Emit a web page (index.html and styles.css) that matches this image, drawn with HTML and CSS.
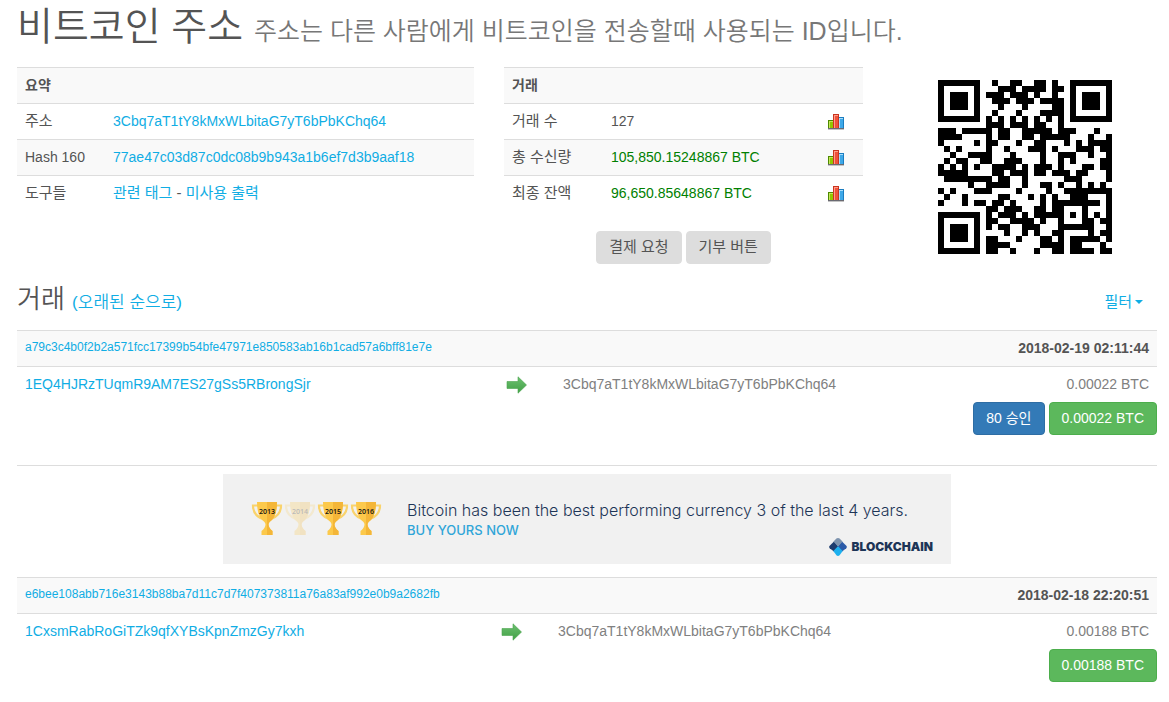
FILE: index.html
```html
<!DOCTYPE html>
<html lang="ko">
<head>
<meta charset="utf-8">
<meta name="viewport" content="width=device-width, initial-scale=1">
<title>비트코인 주소</title>
<link rel="stylesheet" href="styles.css">
</head>
<body>
<svg class="defs" width="0" height="0" aria-hidden="true">
  <defs>
    <linearGradient id="arrow-fill" x1="0" y1="0" x2="0" y2="1"><stop offset="0" stop-color="#6cc070"/><stop offset="1" stop-color="#42a046"/></linearGradient>
    <symbol id="chart" viewBox="0 0 16 16">
      <path fill="#4e8a00" d="M0 6h6v9H0z"/><path fill="#c4e65a" d="M1 7h4v8H1z"/><path fill="#93c700" d="M2 8h3v7H2z"/>
      <path fill="#1b7dc0" d="M10 3h6v12h-6z"/><path fill="#a6dcfb" d="M10 4h5v11h-5z"/><path fill="#3ea8e8" d="M12 5h3v10h-3z"/>
      <path fill="#c9341f" d="M5 0h6v15H5z"/><path fill="#ff9d8a" d="M6 1h4v14H6z"/><path fill="#f0523b" d="M7 2h3v13H7z"/>
      <path fill="#6a6a72" d="M0 14h16v1H0z"/><path fill="#c4c4c4" d="M0 15h16v1H0z"/>
    </symbol>
    <symbol id="arrow" viewBox="0 0 22 18">
      <path fill="url(#arrow-fill)" stroke="#4aa44e" stroke-width=".6" d="M1 5.500h11V.8L20.500 9 12 17.200v-4.700H1z"/>
    </symbol>
    <symbol id="trophy" viewBox="0 0 32 36">
      <path fill="none" stroke="#f9d36c" stroke-width="2.2" d="M7 4.500H2q0 10 10 13.500M25 4.500h5q0 10-10 13.500"/>
      <path fill="#fcc94b" d="M6 1h20q0 15-7.500 20l-1 2q0 4 4 7v4h-11v-4q4-3 4-7l-1-2Q6 16 6 1z"/>
      <path fill="#f4b638" d="M16 1h10q0 15-7.500 20l-1 2q0 4 4 7v4H16z"/>
    </symbol>
  </defs>
</svg>
<main class="page">
  <h1 class="title">비트코인 주소 <small>주소는 다른 사람에게 비트코인을 전송할때 사용되는 ID입니다.</small></h1>

  <div class="overview">
    <table class="info summary">
      <thead><tr><th colspan="2">요약</th></tr></thead>
      <tbody>
        <tr><td class="label ko">주소</td><td><a href="#">3Cbq7aT1tY8kMxWLbitaG7yT6bPbKChq64</a></td></tr>
        <tr><td class="label">Hash 160</td><td><a href="#">77ae47c03d87c0dc08b9b943a1b6ef7d3b9aaf18</a></td></tr>
        <tr><td class="label ko">도구들</td><td class="ko"><a href="#">관련 태그</a> - <a href="#">미사용 출력</a></td></tr>
      </tbody>
    </table>

    <div>
      <table class="info totals">
        <thead><tr><th colspan="3">거래</th></tr></thead>
        <tbody>
          <tr><td class="label ko">거래 수</td><td>127</td><td class="chart-cell"><a href="#" aria-label="거래 수 차트"><svg class="chart"><use href="#chart"/></svg></a></td></tr>
          <tr><td class="label ko">총 수신량</td><td class="amount">105,850.15248867 BTC</td><td class="chart-cell"><a href="#" aria-label="총 수신량 차트"><svg class="chart"><use href="#chart"/></svg></a></td></tr>
          <tr><td class="label ko">최종 잔액</td><td class="amount">96,650.85648867 BTC</td><td class="chart-cell"><a href="#" aria-label="최종 잔액 차트"><svg class="chart"><use href="#chart"/></svg></a></td></tr>
        </tbody>
      </table>
      <div class="actions">
        <button class="btn ko" type="button">결제 요청</button>
        <button class="btn ko" type="button">기부 버튼</button>
      </div>
    </div>

    <div class="qr-box"><svg class="qr" id="qr" viewBox="0 0 29 29" shape-rendering="crispEdges" role="img" aria-label="QR"></svg></div>
  </div>

  <div class="section-head">
    <h2>거래 <a class="order" href="#">(오래된 순으로)</a></h2>
    <a class="filter ko" href="#">필터<span class="caret"></span></a>
  </div>

  <section class="tx">
    <table class="info tx-table">
      <colgroup><col class="from"><col class="dir"><col><col class="value"></colgroup>
      <thead><tr><th colspan="3" class="hash"><a href="#">a79c3c4b0f2b2a571fcc17399b54bfe47971e850583ab16b1cad57a6bff81e7e</a></th><th class="date">2018-02-19 02:11:44</th></tr></thead>
      <tbody><tr><td><a href="#">1EQ4HJRzTUqmR9AM7ES27gSs5RBrongSjr</a></td><td><svg class="arrow"><use href="#arrow"/></svg></td><td class="muted">3Cbq7aT1tY8kMxWLbitaG7yT6bPbKChq64</td><td class="muted value-cell">0.00022 BTC</td></tr></tbody>
    </table>
    <div class="tx-actions">
      <button class="btn primary" type="button">80 승인</button>
      <button class="btn success" type="button">0.00022 BTC</button>
    </div>
  </section>

  <aside class="ad-row">
    <a class="ad" href="#">
      <span class="trophies">
        <span class="trophy"><svg><use href="#trophy"/></svg><span>2013</span></span>
        <span class="trophy faded"><svg><use href="#trophy"/></svg><span>2014</span></span>
        <span class="trophy"><svg><use href="#trophy"/></svg><span>2015</span></span>
        <span class="trophy"><svg><use href="#trophy"/></svg><span>2016</span></span>
      </span>
      <span class="ad-copy"><span class="ad-line">Bitcoin has been the best performing currency 3 of the last 4 years.</span><span class="ad-cta">BUY YOURS NOW</span></span>
      <span class="brand">
        <svg viewBox="0 0 18 18" aria-hidden="true">
          <path fill="#1d3c6e" d="M5 3.500L9.500 8.500 5 13.500.7 10.200Q-.4 9 .7 7.800z"/>
          <path fill="#2b5ba8" d="M13 3.500l4.300 4.300q1.100 1.200 0 2.400L13 13.500 8.500 8.500z"/>
          <path fill="#7d93ad" d="M9 0q1 0 1.600.6L13.500 3.500 9 8.500 4.500 3.500 7.400.6Q8 0 9 0z"/>
          <path fill="#1db0ee" d="M9 8.200l4.700 4.700-3.100 4.300Q9 18.600 7.400 17.200L4.300 12.900z"/>
        </svg>
        <span>BLOCKCHAIN</span>
      </span>
    </a>
  </aside>

  <section class="tx second">
    <table class="info tx-table">
      <colgroup><col class="from"><col class="dir"><col><col class="value"></colgroup>
      <thead><tr><th colspan="3" class="hash"><a href="#">e6bee108abb716e3143b88ba7d11c7d7f407373811a76a83af992e0b9a2682fb</a></th><th class="date">2018-02-18 22:20:51</th></tr></thead>
      <tbody><tr><td><a href="#">1CxsmRabRoGiTZk9qfXYBsKpnZmzGy7kxh</a></td><td><svg class="arrow"><use href="#arrow"/></svg></td><td class="muted">3Cbq7aT1tY8kMxWLbitaG7yT6bPbKChq64</td><td class="muted value-cell">0.00188 BTC</td></tr></tbody>
    </table>
    <div class="tx-actions">
      <button class="btn success" type="button">0.00188 BTC</button>
    </div>
  </section>
</main>
<script src="qr.js"></script>
</body>
</html>
```
FILE: styles.css
```css
* { box-sizing: border-box; }
body {
  margin: 0;
  background: #fff;
  color: #545454;
  font: 14px/20px "Liberation Sans", "Noto Sans CJK KR", sans-serif;
}
a { color: #10ade4; text-decoration: none; }
.defs { position: absolute; }
.page { padding: 2px 12px 0 17px; }

.title { margin: 0; height: 65px; font-size: 39px; line-height: 50px; font-weight: 350; white-space: nowrap; }
.title small { font-size: 25px; line-height: 1; color: #777; }

.overview { display: grid; grid-template-columns: 457fr 359fr 264fr; gap: 30px; align-items: start; }
.info { width: 100%; border-collapse: separate; border-spacing: 0; }
.info th, .info td { height: 36px; padding: 7px 8px 8px; border-top: 1px solid #ddd; text-align: left; vertical-align: top; white-space: nowrap; }
.info th { background: #f9f9f9; }
.summary tr:nth-child(2) td, .totals tr:nth-child(2) td { background: #f9f9f9; }
.summary .label { width: 88px; }
.totals .label { width: 99px; }
.amount { color: #008000; }
.info .chart-cell { width: 43px; padding-top: 10px; }
.chart { display: block; width: 16px; height: 16px; }

.btn {
  height: 33px; padding: 0 12px 1px; border: 1px solid #ddd; border-radius: 4px;
  background: #ddd; color: #545454; font: inherit; white-space: nowrap;
}
.btn.primary { background: #337ab7; border-color: #2e6da4; color: #fff; }
.btn.success { background: #5cb85c; border-color: #4cae4c; color: #fff; }
.info .ko, .ko { font-size: 15px; }
.actions { display: flex; justify-content: center; gap: 4px; margin-top: 20px; }

.qr-box { display: flex; justify-content: center; padding-top: 13px; }
.qr { width: 174px; height: 174px; }

.section-head { display: flex; justify-content: space-between; align-items: flex-start; height: 66px; padding-right: 14px; }
.section-head h2 { margin: 0; padding-top: 18px; font-size: 26px; line-height: 34px; font-weight: 350; }
.section-head .order { font-size: 17px; }
.filter { display: flex; align-items: center; gap: 3px; padding-top: 28px; }
.caret { border: 4px solid transparent; border-top-color: currentColor; border-bottom-width: 0; }

.tx { min-height: 135px; }
.tx-table { table-layout: fixed; }
.from { width: 481px; }
.dir { width: 57px; }
.second .from { width: 476px; }
.value { width: 170px; }
.info .hash { font-size: 12px; line-height: 18px; font-weight: 400; }
.info .date, .info .value-cell { text-align: right; }
.muted { color: #808080; }
.arrow { display: block; width: 22px; height: 18px; margin-top: 2px; }
.tx-actions { display: flex; justify-content: flex-end; gap: 4px; }

.ad-row { display: flex; justify-content: center; padding: 8px 0 13px; border-top: 1px solid #ddd; }
.ad { position: relative; display: flex; width: 728px; height: 90px; padding: 26px 16px 0 28px; background: #f1f1f1; }
.trophies { display: flex; width: 156px; padding-top: 1px; }
.trophy { position: relative; width: 33px; height: 37px; color: #111; font: 600 7px/8px "Open Sans", sans-serif; text-align: center; }
.trophy svg { display: block; width: 32px; height: 36px; }
.trophy span { position: absolute; left: 0; right: 1px; top: 7px; }
.faded { opacity: .25; }
.ad-copy { display: flex; flex-direction: column; color: #1d3557; }
.ad-line { font: 300 16px/20px Inter, sans-serif; white-space: nowrap; }
.ad-cta { color: #2fa5d8; font: 500 13px/20px Inter, sans-serif; }
.brand { position: absolute; right: 18px; bottom: 8px; display: flex; align-items: center; gap: 4px; color: #1d3557; font: 900 12px/18px Inter, sans-serif; }
.brand svg { width: 18px; height: 18px; }
```
FILE: qr.js
```js
// Draws the address as a version 3-L QR code (29x29, mask 0).
(function () {
  const text = "3Cbq7aT1tY8kMxWLbitaG7yT6bPbKChq64";
  const N = 29, DATA = 55, EC = 15;

  const bits = [];
  const push = (v, n) => { for (let i = n - 1; i >= 0; i--) bits.push((v >> i) & 1); };
  push(4, 4);
  push(text.length, 8);
  for (const c of text) push(c.charCodeAt(0), 8);
  push(0, 4);
  for (let pad = 0xec; bits.length < DATA * 8; pad ^= 0xfd) push(pad, 8);

  const exp = [], log = [];
  for (let i = 0, x = 1; i < 255; i++) { exp[i] = x; log[x] = i; x <<= 1; if (x & 256) x ^= 0x11d; }
  const mul = (a, b) => (a && b ? exp[(log[a] + log[b]) % 255] : 0);
  let gen = [1];
  for (let i = 0; i < EC; i++) {
    const next = gen.concat(0);
    gen.forEach((g, j) => { next[j + 1] ^= mul(g, exp[i]); });
    gen = next;
  }
  const bytes = [];
  for (let i = 0; i < bits.length; i += 8) bytes.push(parseInt(bits.slice(i, i + 8).join(""), 2));
  const rem = bytes.concat(new Array(EC).fill(0));
  for (let i = 0; i < DATA; i++) {
    const f = rem[i];
    gen.forEach((g, j) => { rem[i + j] ^= mul(g, f); });
  }
  rem.slice(DATA).forEach((b) => push(b, 8));

  const m = Array.from({ length: N }, () => new Array(N).fill(-1));
  const finder = (r, c) => {
    for (let y = -1; y < 8; y++) for (let x = -1; x < 8; x++) {
      if (r + y < 0 || c + x < 0 || r + y >= N || c + x >= N) continue;
      const d = Math.max(Math.abs(y - 3), Math.abs(x - 3));
      m[r + y][c + x] = d === 3 || d < 2 ? 1 : 0;
    }
  };
  finder(0, 0); finder(0, N - 7); finder(N - 7, 0);
  for (let y = -2; y < 3; y++) for (let x = -2; x < 3; x++) {
    m[22 + y][22 + x] = Math.max(Math.abs(y), Math.abs(x)) === 1 ? 0 : 1;
  }
  for (let i = 8; i < N - 8; i++) m[6][i] = m[i][6] = (i + 1) % 2;

  const format = 0b111011111000100;
  for (let i = 0; i < 15; i++) {
    const b = (format >> i) & 1;
    m[i < 6 ? i : i < 8 ? i + 1 : N - 15 + i][8] = b;
    m[8][i < 8 ? N - 1 - i : i < 9 ? 7 : 14 - i] = b;
  }
  m[N - 8][8] = 1;

  let k = 0, up = true;
  for (let c = N - 1; c > 0; c -= 2) {
    if (c === 6) c--;
    for (let i = 0; i < N; i++) {
      const r = up ? N - 1 - i : i;
      for (const x of [c, c - 1]) {
        if (m[r][x] === -1) m[r][x] = (bits[k++] || 0) ^ ((r + x) % 2 === 0 ? 1 : 0);
      }
    }
    up = !up;
  }

  let d = "";
  m.forEach((row, y) => row.forEach((v, x) => { if (v) d += `M${x} ${y}h1v1h-1z`; }));
  const path = document.createElementNS("http://www.w3.org/2000/svg", "path");
  path.setAttribute("d", d);
  document.getElementById("qr").appendChild(path);
})();
```
